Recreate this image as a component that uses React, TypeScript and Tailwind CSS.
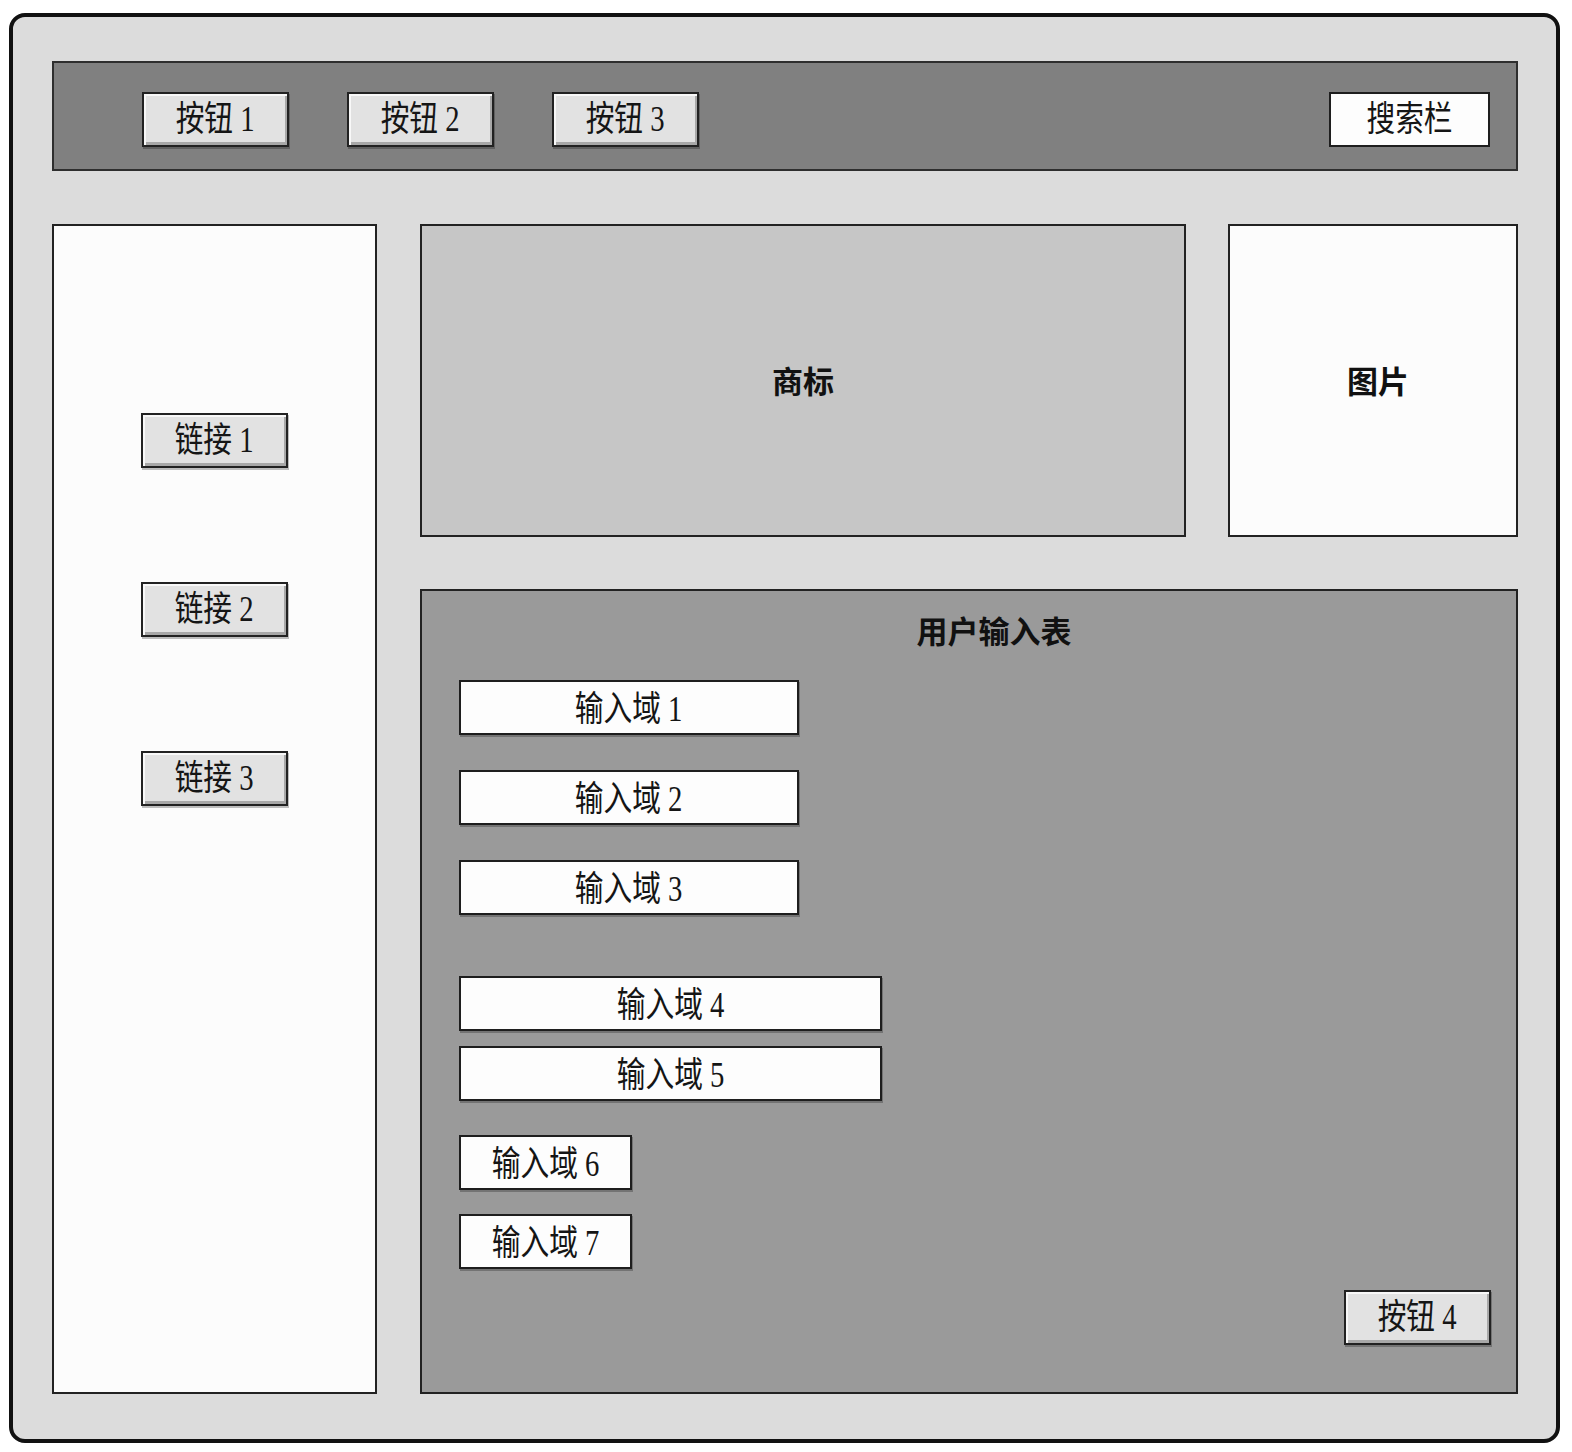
const font = 'font-["Liberation_Serif","Noto_Sans_CJK_SC",serif]'
const boldFont = 'font-["Noto_Sans_CJK_SC",sans-serif] font-bold'

function Label({ children }: { children: React.ReactNode }) {
  return (
    <span className={`${font} inline-block scale-x-[0.82] text-[35px] leading-none text-[#151515]`}>
      {children}
    </span>
  )
}

function BevelButton({ children, w = 'w-[147px]' }: { children: React.ReactNode; w?: string }) {
  return (
    <div
      className={`${w} h-[55px] flex items-center justify-center border-2 border-[#222] bg-[#e2e2e2] shadow-[inset_2px_2px_0_#f8f8f8,inset_-2px_-3px_0_#a8a8a8,1px_2px_0_rgba(0,0,0,0.25)]`}
    >
      <Label>{children}</Label>
    </div>
  )
}

function Field({ children, w }: { children: React.ReactNode; w: string }) {
  return (
    <div
      className={`${w} h-[55px] flex items-center justify-center pt-[4px] border-2 border-[#1e1e1e] bg-[#fdfdfd] shadow-[1px_2px_0_rgba(0,0,0,0.25)]`}
    >
      <Label>{children}</Label>
    </div>
  )
}

export default function App() {
  return (
    <div className="w-[1572px] h-[1452px] bg-white pl-[9px] pt-[13px]">
      <div className="w-[1551px] h-[1430px] rounded-[16px] border-4 border-[#111] bg-[#dcdcdc] pl-[39px] pt-[44px] pr-[38px] pb-[45px] flex flex-col gap-[53px]">
        {/* top bar */}
        <div className="h-[110px] shrink-0 border-2 border-[#2e2e2e] bg-[#808080] flex items-start pt-[29px] pl-[88px] pr-[26px]">
          <div className="flex gap-[58px]">
            <BevelButton>按钮 1</BevelButton>
            <BevelButton>按钮 2</BevelButton>
            <BevelButton>按钮 3</BevelButton>
          </div>
          <div className="ml-auto w-[161px] h-[55px] flex items-center justify-center border-2 border-[#1e1e1e] bg-[#fdfdfd]">
            <Label>搜索栏</Label>
          </div>
        </div>

        {/* main */}
        <div className="flex-1 flex gap-[43px] min-h-0">
          {/* sidebar */}
          <div className="w-[325px] border-2 border-[#222] bg-[#fcfcfc] flex flex-col items-center pt-[187px] gap-[114px]">
            <BevelButton>链接 1</BevelButton>
            <BevelButton>链接 2</BevelButton>
            <BevelButton>链接 3</BevelButton>
          </div>

          <div className="flex-1 flex flex-col gap-[52px]">
            <div className="h-[313px] shrink-0 flex gap-[42px]">
              <div className="w-[766px] border-2 border-[#222] bg-[#c6c6c6] flex items-center justify-center">
                <span className={`${boldFont} text-[31px] text-[#111]`}>商标</span>
              </div>
              <div className="flex-1 border-2 border-[#222] bg-[#fcfcfc] flex items-center justify-center pl-[10px]">
                <span className={`${boldFont} text-[31px] text-[#111]`}>图片</span>
              </div>
            </div>

            {/* form */}
            <div className="flex-1 border-2 border-[#222] bg-[#9a9a9a] flex flex-col pl-[37px] pr-[25px] pt-[18px] pb-[47px]">
              <div className="flex justify-center pl-[38px]">
                <span className={`${boldFont} text-[31px] leading-[42px] text-[#111]`}>用户输入表</span>
              </div>
              <div className="mt-[29px] flex flex-col gap-[35px]">
                <Field w="w-[340px]">输入域 1</Field>
                <Field w="w-[340px]">输入域 2</Field>
                <Field w="w-[340px]">输入域 3</Field>
              </div>
              <div className="mt-[61px] flex flex-col gap-[15px]">
                <Field w="w-[423px]">输入域 4</Field>
                <Field w="w-[423px]">输入域 5</Field>
              </div>
              <div className="mt-[34px] flex flex-col gap-[24px]">
                <Field w="w-[173px]">输入域 6</Field>
                <Field w="w-[173px]">输入域 7</Field>
              </div>
              <div className="mt-auto self-end">
                <BevelButton>按钮 4</BevelButton>
              </div>
            </div>
          </div>
        </div>
      </div>
    </div>
  )
}
